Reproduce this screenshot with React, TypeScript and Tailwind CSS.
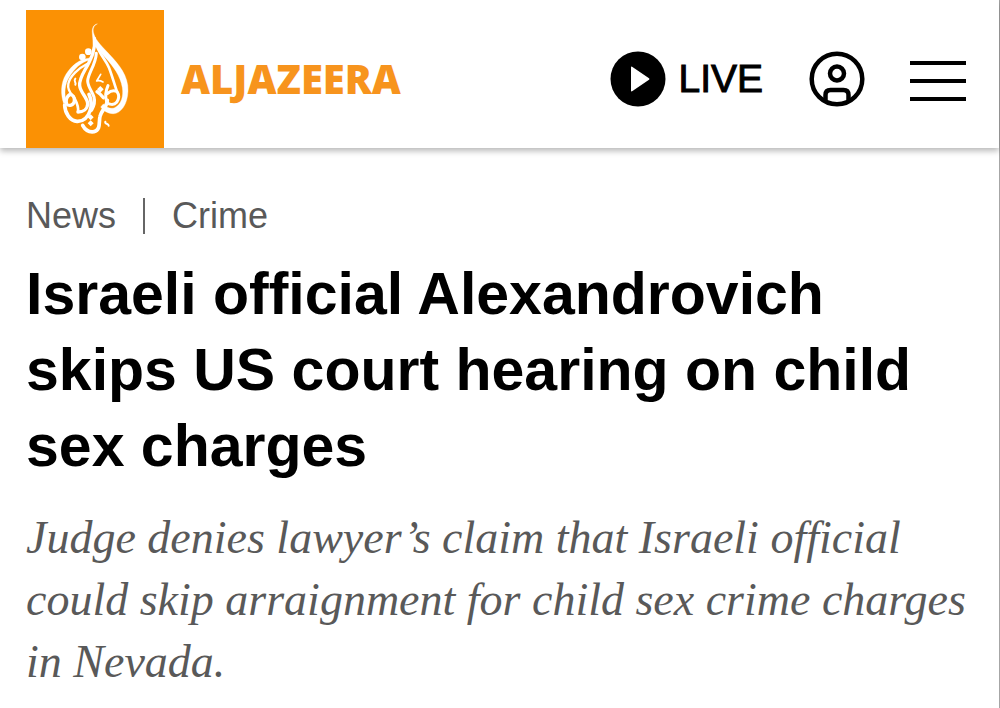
function FlameMark() {
  return (
    <svg viewBox="18 15 414 414" className="size-full" aria-hidden="true">
      <g fill="none" stroke="#fff" strokeLinecap="round" strokeLinejoin="round">
        <path fill="#fff" strokeWidth="1" d="M231 57C220 62 217 74 222 88C228 108 248 126 268 148C296 178 326 212 324 258C323 300 300 328 278 326C260 325 250 316 242 306L250 297C261 308 273 313 284 308C304 298 311 274 307 248C301 212 280 184 256 158C234 134 217 112 217 86C215 68 221 59 231 57Z" />
        <path strokeWidth="10" d="M223 100C227 133 215 157 202 182C190 204 177 222 179 242C181 264 203 277 203 297C202 313 189 321 174 321" />
        <path strokeWidth="8" d="M230 122C240 150 256 163 267 188C275 208 282 234 291 260" />
        <path strokeWidth="9" d="M229 145C227 180 204 205 203 228C204 247 216 258 222 276C226 290 222 304 215 316" />
        <path fill="#fff" strokeWidth="1" d="M209 159C178 162 154 182 138 208C121 235 122 270 131 296L139 290C132 266 134 238 148 216C163 192 182 171 209 165Z" />
        <path strokeWidth="7" d="M201 177C175 190 150 213 145 236C142 252 149 262 158 272" />
        <path strokeWidth="10" d="M151 268C140 272 136 288 140 297C147 305 161 301 163 289C164 277 158 269 151 268Z" />
        <path strokeWidth="11" d="M134 300C135 325 150 348 171 349C190 350 204 336 210 318C216 302 214 284 207 268" />
        <path strokeWidth="8" d="M161 275C168 289 177 303 174 320" />
        <path strokeWidth="11" d="M188 361C196 376 208 382 222 380C243 375 236 350 240 334C244 316 261 306 262 286" />
        <path strokeWidth="9" d="M264 242C256 260 256 278 260 290C266 300 282 301 290 292C297 282 298 270 291 260C281 255 270 259 262 266" />
        <path strokeWidth="10" d="M231 260L240 267L250 278" />
        <path strokeWidth="5" d="M242 208L230 228Q238 225 249 231" />
        <path strokeWidth="6" d="M166 221C159 229 170 232 166 239" />
        <path strokeWidth="6" d="M256 350C253 358 266 354 266 362" />
      </g>
      <g fill="#fff">
        <circle cx="205" cy="140" r="10" />
        <circle cx="187" cy="156" r="10" />
        <path d="M212 328L221 337L212 346L203 337ZM212 346L221 355L212 364L203 355ZM241 243L251 253L241 263L231 253Z" />
      </g>
    </svg>
  );
}

function PlayIcon() {
  return (
    <svg viewBox="0 0 56 56" className="size-14" aria-hidden="true">
      <circle cx="28" cy="28" r="27.5" />
      <path fill="#fff" d="M21 16.500Q21 15 22.500 16L39 27.200Q40 28 39 28.800L22.500 40Q21 41 21 39.500Z" />
    </svg>
  );
}

function AccountIcon() {
  return (
    <svg viewBox="0 0 56 56" className="size-14" fill="none" stroke="currentColor" strokeWidth="4.500" aria-hidden="true">
      <circle cx="28" cy="28" r="25.300" />
      <circle cx="28" cy="22.500" r="7" />
      <path d="M16.500 50V44Q16.500 39 21.500 39H34.500Q39.500 39 39.500 44V50" />
    </svg>
  );
}

export default function App() {
  return (
    <div className="min-h-screen border-r border-[#a6a6a6] bg-white font-['Liberation_Sans',Arial,sans-serif] text-black">
      <header className="flex items-start justify-between pt-[10px] pr-[33px] pl-[26px] shadow-[0_3px_6px_rgba(0,0,0,0.28)]">
        <a href="#" aria-label="Al Jazeera home" className="flex items-center gap-[17px]">
          <span className="block size-[138px] bg-[#fb9104]">
            <FlameMark />
          </span>
          <span className="font-['Open_Sans','Noto_Sans',sans-serif] text-[40px] leading-[48px] font-extrabold text-[#f7941d]">
            ALJAZEERA
          </span>
        </a>
        <nav aria-label="Main" className="flex h-[138px] items-center">
          <a href="#" className="flex items-center gap-3">
            <PlayIcon />
            <span className="text-[39px] leading-[46px] font-normal [-webkit-text-stroke:1px_black]">LIVE</span>
          </a>
          <button type="button" aria-label="Account" className="ml-[46px]">
            <AccountIcon />
          </button>
          <button type="button" aria-label="Menu" className="ml-[45px] flex flex-col gap-[14px] pt-1">
            <span className="h-1 w-14 bg-black" />
            <span className="h-1 w-14 bg-black" />
            <span className="h-1 w-14 bg-black" />
          </button>
        </nav>
      </header>
      <main className="px-[26px] pt-[46px]">
        <nav aria-label="Topics" className="flex items-center text-[36px] leading-[44px] text-[#595959]">
          <a href="#">News</a>
          <span className="mx-[27px] h-9 w-[2px] bg-[#666]" />
          <a href="#">Crime</a>
        </nav>
        <h1 className="mt-[18px] text-[59px] leading-[76px] font-bold">
          Israeli official Alexandrovich skips US court hearing on child sex charges
        </h1>
        <p className="mt-[23px] font-['Liberation_Serif',Georgia,serif] text-[46px] leading-[62px] text-[#595959] italic">
          Judge denies lawyer’s claim that Israeli official could skip arraignment for child sex crime charges in Nevada.
        </p>
      </main>
    </div>
  );
}
